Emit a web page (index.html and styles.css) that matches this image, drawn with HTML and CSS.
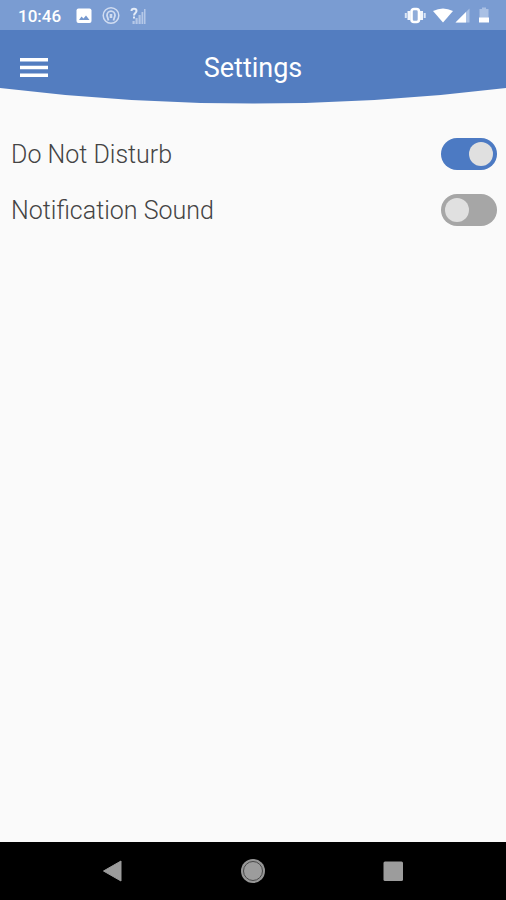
FILE: index.html
```html
<!DOCTYPE html>
<html lang="en">
<head>
<meta charset="utf-8">
<meta name="viewport" content="width=device-width, initial-scale=1">
<title>Settings</title>
<link rel="stylesheet" href="styles.css">
</head>
<body>
<div class="status">
  <time class="clock">10:46</time>
  <svg class="status-left" width="80" height="20" viewBox="0 0 80 20" aria-hidden="true">
    <rect x="8.500" y="2.500" width="15" height="14.500" rx="2" fill="#fff"/>
    <path d="M11 14l2.500-3.500 2 2 2.500-3 3.500 4.500z" fill="#7598cf"/>
    <g fill="none" stroke="#d0dcf1">
      <circle cx="43" cy="9.500" r="7.800" stroke-width="1.500"/>
      <path d="M40.500 14.500L39 9.500a4 4.300 0 1 1 8 0l-1.500 5" stroke-width="1.800"/>
      <path d="M43 8v4" stroke-width="2.600"/>
    </g>
    <g fill="#b5c8e8">
      <path d="M64.500 15h2.200v3h-2.200zM67.500 12h2.200v6h-2.200zM70.500 9h2.200v9h-2.200zM73.500 6h1.800v12h-1.800zM76 3h1.500v15h-1.500z"/>
    </g>
    <path d="M63.500 5c0-3 5-3 5 0 0 2-2.500 2-2.500 4.500M66 10.500v2" fill="none" stroke="#e4ecf8" stroke-width="2"/>
  </svg>
  <svg class="status-right" width="88" height="20" viewBox="0 0 88 20" aria-hidden="true">
    <rect x="7.500" y="3" width="7.500" height="13" rx="2.500" fill="#90add9" stroke="#fff" stroke-width="2.600"/>
    <path d="M5 5v9M17.500 5v9" stroke="#f2f6fc" stroke-width="3"/>
    <path d="M1.800 7v5M20.700 7v5" stroke="#dce6f5" stroke-width="2"/>
    <path d="M29 5q10-5 20 0L39 16.500z" fill="#fff"/>
    <path d="M65.500 2.500v14h-14z" fill="#a9c0e4"/>
    <path d="M62 6v10.500H51.500z" fill="#fff"/>
    <path d="M75.500 3h2.500V1.500h4V3h2.500v9h-9z" fill="#a9c0e4"/>
    <path d="M75 11.500h10v5H75z" fill="#fff"/>
  </svg>
</div>
<header class="header">
  <div class="bar">
    <button class="menu" type="button" aria-label="Menu">
      <svg width="28" height="20" viewBox="0 0 28 20" aria-hidden="true"><path d="M0 1.700h28M0 9.500h28M0 17.200h28" stroke="#fff" stroke-width="3.600"/></svg>
    </button>
    <h1 class="title">Settings</h1>
  </div>
  <svg class="curve" viewBox="0 0 506 16" preserveAspectRatio="none" aria-hidden="true"><path d="M0 0Q253 31 506 0z" fill="#537dc0"/></svg>
</header>
<main class="list">
  <label class="row"><span class="label">Do Not Disturb</span><input class="toggle" type="checkbox" role="switch" checked></label>
  <label class="row"><span class="label">Notification Sound</span><input class="toggle" type="checkbox" role="switch"></label>
</main>
<nav class="nav" aria-label="System navigation">
  <button type="button" aria-label="Back"><svg width="24" height="24" viewBox="0 0 24 24"><path d="M2.500 12L20 2v20z" fill="#9c9c9c" stroke="#9c9c9c" stroke-linejoin="round"/></svg></button>
  <button type="button" aria-label="Home"><svg width="24" height="24" viewBox="0 0 24 24"><circle cx="12" cy="12" r="12" fill="#969696"/><circle cx="12" cy="12" r="9.500" fill="#9c9c9c" stroke="#484848" stroke-width="1"/></svg></button>
  <button type="button" aria-label="Recent apps"><svg width="24" height="24" viewBox="0 0 24 24"><rect x="2.500" y="2.500" width="19.500" height="19.500" rx="1.500" fill="#9c9c9c"/></svg></button>
</nav>
</body>
</html>
```
FILE: styles.css
```css
* {
  box-sizing: border-box;
}

body {
  margin: 0;
  min-height: 100vh;
  display: flex;
  flex-direction: column;
  background: #fafafa;
  font-family: Roboto, "Liberation Sans", sans-serif;
}

svg {
  display: block;
}

button {
  padding: 0;
  border: 0;
  background: none;
}

.status {
  height: 30px;
  padding: 2px 14px 0 18px;
  display: flex;
  align-items: center;
  background: #7a9cd2;
  color: #fff;
}

.clock {
  font-size: 17px;
  font-weight: 500;
  line-height: 20px;
}

.status-left {
  margin-left: 7px;
}

.status-right {
  margin-left: auto;
}

.bar {
  height: 58px;
  padding: 18px 20px 0;
  display: grid;
  grid-template-columns: 28px 1fr 28px;
  align-items: center;
  background: #537dc0;
}

.title {
  margin: 0;
  color: #fff;
  font-size: 27px;
  font-weight: 400;
  line-height: 32px;
  text-align: center;
}

.curve {
  width: 100%;
  height: 16px;
}

.list {
  flex: 1;
  padding: 34px 9px 34px 11px;
  display: flex;
  flex-direction: column;
  gap: 24px;
}

.row {
  display: flex;
  align-items: center;
  justify-content: space-between;
  color: #444;
  font-size: 25px;
  font-weight: 300;
  line-height: 30px;
}

.label {
  padding-top: 2px;
}

.toggle {
  appearance: none;
  width: 56px;
  height: 32px;
  margin: 0;
  padding: 4px;
  display: flex;
  border-radius: 16px;
  background: #a6a6a6;
}

.toggle::before {
  content: "";
  width: 24px;
  height: 24px;
  border-radius: 50%;
  background: #e0e0e0;
}

.toggle:checked {
  justify-content: flex-end;
  background: #4c7ac3;
}

.nav {
  height: 58px;
  padding: 0 43px;
  display: grid;
  grid-template-columns: repeat(3, 1fr);
  align-items: center;
  justify-items: center;
  background: #000;
}
```
